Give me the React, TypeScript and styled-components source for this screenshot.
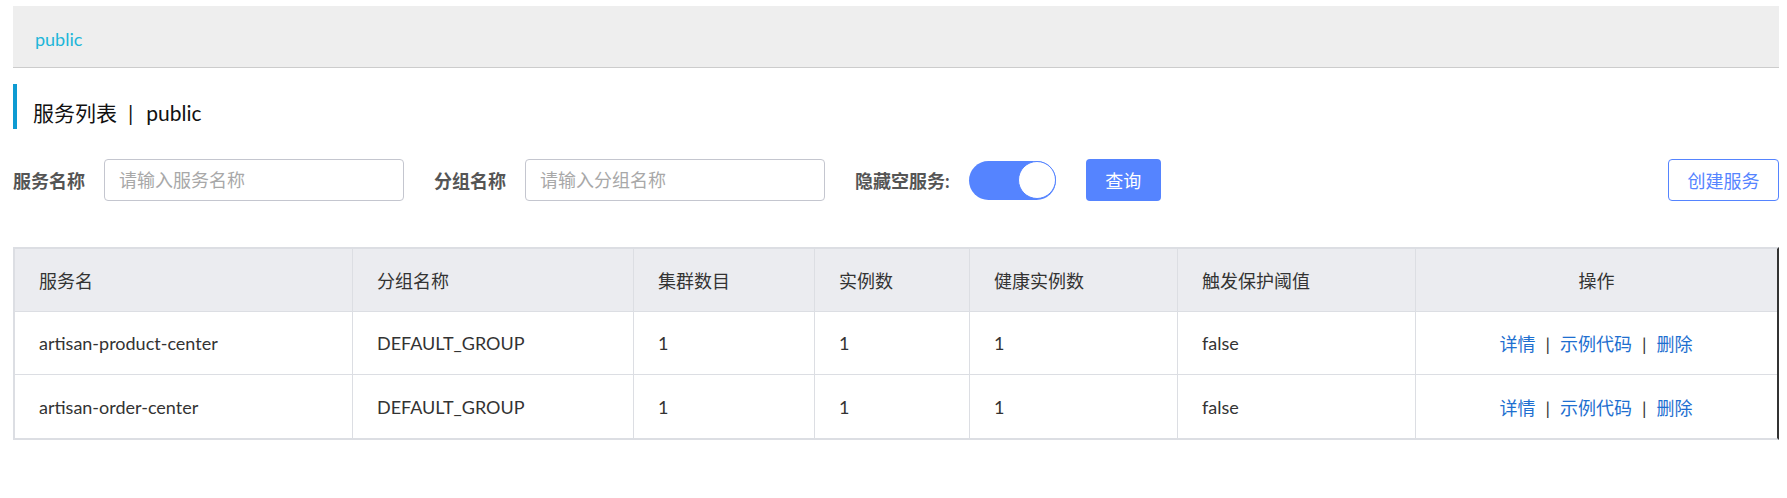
import styled, { createGlobalStyle } from "styled-components";

const GlobalStyle = createGlobalStyle`
  html, body {
    margin: 0;
    padding: 0;
    background: #fff;
  }
  body {
    font-family: Lato, "Noto Sans CJK SC", sans-serif;
    font-size: 18px;
    color: #333;
  }
  * {
    box-sizing: border-box;
  }
`;

interface IService {
  name: string;
  group: string;
  clusters: number;
  instances: number;
  healthy: number;
  threshold: string;
}

const services: IService[] = [
  { name: "artisan-product-center", group: "DEFAULT_GROUP", clusters: 1, instances: 1, healthy: 1, threshold: "false" },
  { name: "artisan-order-center", group: "DEFAULT_GROUP", clusters: 1, instances: 1, healthy: 1, threshold: "false" },
];

const columns = [
  { title: "服务名", width: 338 },
  { title: "分组名称", width: 281 },
  { title: "集群数目", width: 181 },
  { title: "实例数", width: 155 },
  { title: "健康实例数", width: 208 },
  { title: "触发保护阈值", width: 238 },
  { title: "操作", width: 361, center: true },
];

const App = () => {
  return (
    <Page>
      <GlobalStyle />
      <Breadcrumb>
        <Crumb>public</Crumb>
      </Breadcrumb>
      <Title>
        服务列表<TitleSep>|</TitleSep>public
      </Title>
      <Toolbar>
        <Label>服务名称</Label>
        <Input placeholder="请输入服务名称" />
        <Label>分组名称</Label>
        <Input placeholder="请输入分组名称" />
        <Label>隐藏空服务:</Label>
        <Switch>
          <Knob />
        </Switch>
        <PrimaryButton>查询</PrimaryButton>
        <Spacer />
        <OutlineButton>创建服务</OutlineButton>
      </Toolbar>
      <Table>
        <colgroup>
          {columns.map((c) => (
            <col key={c.title} style={{ width: c.width }} />
          ))}
        </colgroup>
        <thead>
          <tr>
            {columns.map((c) => (
              <HeadCell key={c.title} center={c.center}>
                {c.title}
              </HeadCell>
            ))}
          </tr>
        </thead>
        <tbody>
          {services.map((s) => (
            <tr key={s.name}>
              <Cell>{s.name}</Cell>
              <Cell>{s.group}</Cell>
              <Cell>{s.clusters}</Cell>
              <Cell>{s.instances}</Cell>
              <Cell>{s.healthy}</Cell>
              <Cell>{s.threshold}</Cell>
              <Cell center>
                <Link>详情</Link>
                <Sep>|</Sep>
                <Link>示例代码</Link>
                <Sep>|</Sep>
                <Link>删除</Link>
              </Cell>
            </tr>
          ))}
        </tbody>
      </Table>
    </Page>
  );
};

export default App;

const Page = styled.div`
  padding: 6px 8px 0 13px;
  width: 1787px;
`;

const Breadcrumb = styled.div`
  display: flex;
  align-items: center;
  height: 62px;
  padding-left: 22px;
  background-color: #eeeeee;
  border-bottom: 1px solid #cccccc;
`;

const Crumb = styled.span`
  color: #1db6d9;
  font-size: 18px;
  padding-top: 4px;
`;

const Title = styled.div`
  margin-top: 16px;
  height: 45px;
  padding-top: 12px;
  line-height: 33px;
  padding-left: 16px;
  border-left: 4px solid #0e9bd2;
  font-size: 21px;
  color: #111;
`;

const TitleSep = styled.span`
  margin: 0 13px 0 11px;
`;

const Toolbar = styled.div`
  display: flex;
  align-items: center;
  margin-top: 30px;
  height: 42px;
`;

const Label = styled.span`
  font-weight: bold;
  color: #555;
  margin-right: 19px;
  white-space: nowrap;
`;

const Input = styled.input`
  width: 300px;
  height: 42px;
  margin-right: 30px;
  padding: 0 14px;
  border: 1px solid #c4c6cf;
  border-radius: 4px;
  font-family: inherit;
  font-size: 18px;
  color: #333;
  outline: none;

  &::placeholder {
    color: #a8a8a8;
  }
`;

const Switch = styled.div`
  display: flex;
  justify-content: flex-end;
  align-items: center;
  width: 87px;
  height: 39px;
  margin-right: 30px;
  border-radius: 20px;
  background-color: #5584ff;
`;

const Knob = styled.div`
  width: 38px;
  height: 38px;
  border-radius: 50%;
  background-color: #fff;
  border: 1.5px solid #5584ff;
`;

const PrimaryButton = styled.button`
  width: 75px;
  height: 42px;
  border: none;
  border-radius: 4px;
  background-color: #5584ff;
  color: #fff;
  font-family: inherit;
  font-size: 18px;
`;

const Spacer = styled.div`
  flex: 1;
`;

const OutlineButton = styled.button`
  width: 111px;
  height: 42px;
  border: 1px solid #5584ff;
  border-radius: 4px;
  background-color: #fff;
  color: #5584ff;
  font-family: inherit;
  font-size: 18px;
`;

const Table = styled.table`
  margin-top: 46px;
  width: 100%;
  table-layout: fixed;
  border-collapse: separate;
  border-spacing: 0;
  border: 2px solid #dcdee3;
  border-right-color: #333;
`;

const HeadCell = styled.th<{ center?: boolean }>`
  height: 63px;
  padding: 0;
  padding-left: ${(p) => (p.center ? "0" : "24px")};
  text-align: ${(p) => (p.center ? "center" : "left")};
  font-weight: normal;
  color: #333;
  background-color: #ebecf0;
  border-bottom: 1px solid #dcdee3;
  border-right: 1px solid #dcdee3;

  &:last-child {
    border-right: none;
  }
`;

const Cell = styled.td<{ center?: boolean }>`
  height: 63px;
  padding-left: ${(p) => (p.center ? "0" : "24px")};
  text-align: ${(p) => (p.center ? "center" : "left")};
  color: #333;
  border-bottom: 1px solid #dcdee3;
  border-right: 1px solid #dcdee3;
  white-space: nowrap;

  &:last-child {
    border-right: none;
  }

  tr:last-child > & {
    border-bottom: none;
  }
`;

const Link = styled.a`
  color: #1e6fd0;
  cursor: pointer;
`;

const Sep = styled.span`
  margin: 0 10px;
  color: #333;
`;
